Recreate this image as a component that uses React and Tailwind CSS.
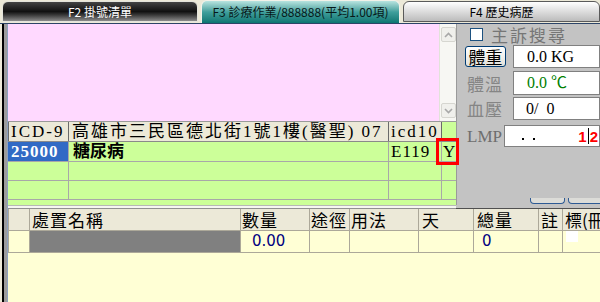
export default function App() {
  const serif = "font-['Liberation_Serif','Noto_Sans_CJK_TC',serif]";
  return (
    <div className="relative w-[600px] h-[302px] overflow-hidden bg-[#ece9d8] flex flex-col font-['Noto_Sans_CJK_TC',sans-serif]">
      {/* tabs */}
      <div className="h-[23px] shrink-0 flex items-end gap-[3px] pl-[2px]">
        <div className="w-[196px] h-[21px] mb-[1px] shrink-0 rounded-t-[6px] border border-[#e4e4dc] bg-linear-to-b from-[#444444] via-[#111111] to-[#8c8c8c] text-white text-[12px] leading-none flex items-center justify-center">
          F2 掛號清單
        </div>
        <div className="w-[199px] h-[23px] shrink-0 rounded-t-[6px] border border-b-0 border-[#f2f2ea] bg-linear-to-b from-[#b8e4e0] via-[#3f9f9c] to-[#0a7672] text-[#081818] text-[12px] leading-none flex items-center justify-center">
          F3 診療作業/888888(平均1.00項)
        </div>
        <div className="w-[197px] h-[21px] mb-[1px] shrink-0 rounded-t-[6px] border border-[#5a5a5a] bg-linear-to-b from-white to-[#bcbcbc] text-black text-[12px] leading-none flex items-center justify-center">
          F4 歷史病歷
        </div>
      </div>

      {/* body */}
      <div className="flex-1 flex border-t border-[#2c4468] min-h-0">
        {/* left frame */}
        <div className="w-[8px] shrink-0 flex">
          <div className="w-[2px] bg-[#ece9d8]" />
          <div className="w-[2px] bg-black" />
          <div className="w-[3px] bg-[#9c9c9c]" />
          <div className="w-[1px] bg-[#8da2c0]" />
        </div>

        <div className="flex-1 flex flex-col min-w-0">
          {/* top section */}
          <div className="h-[181px] shrink-0 flex">
            <div className="w-[448px] shrink-0 flex flex-col bg-[#ccff99]">
              <div className="h-[97px] flex">
                <div className="w-[431px] bg-[#ffd9ff]" />
                <div className="w-[17px] bg-[#f7f7f3] border-l border-[#e2e2da] flex flex-col justify-between items-center py-[3px]">
                  <div className="w-[15px] h-[15px] rounded-[2px] border border-[#d6d6d0] bg-[#f0f0ec] flex items-center justify-center">
                    <svg width="9" height="6" viewBox="0 0 9 6">
                      <polyline points="1,5 4.5,1.5 8,5" fill="none" stroke="#a8a8a8" strokeWidth="1.6" />
                    </svg>
                  </div>
                  <div className="w-[15px] h-[15px] rounded-[2px] border border-[#d6d6d0] bg-[#f0f0ec] flex items-center justify-center">
                    <svg width="9" height="6" viewBox="0 0 9 6">
                      <polyline points="1,1 4.5,4.5 8,1" fill="none" stroke="#a8a8a8" strokeWidth="1.6" />
                    </svg>
                  </div>
                </div>
              </div>
              <div className="h-[1px] bg-[#9a9a9a]" />
              {/* ICD header */}
              <div className={`h-[20px] flex border-b border-[#8a8a8a] text-[17px] leading-none ${serif}`}>
                <div className="w-[61px] bg-[#ece9d8] border-l border-r border-[#6a6a6a] flex items-center pl-[2px] tracking-[2px]">ICD-9</div>
                <div className="w-[320px] bg-[#ece9d8] border-r border-[#6a6a6a] flex items-center pl-[3px] tracking-[2px] whitespace-nowrap overflow-hidden">高雄市三民區德北街1號1樓(醫聖) 07</div>
                <div className="w-[53px] bg-[#ece9d8] border-r border-[#6a6a6a] flex items-center pl-[2px] tracking-[2px]">icd10</div>
                <div className="w-[14px]" />
              </div>
              {/* row 1 */}
              <div className={`h-[20px] flex border-b border-[#a8a8a8] text-[17px] leading-none ${serif}`}>
                <div className="w-[61px] bg-[#316ac5] text-white font-bold border-r border-[#a8a8a8] flex items-center pl-[3px] tracking-[1px]">25000</div>
                <div className="w-[320px] border-r border-[#a8a8a8] flex items-center pl-[4px] font-bold">糖尿病</div>
                <div className="w-[53px] border-r border-[#a8a8a8] flex items-center pl-[2px] tracking-[1px]">E119</div>
                <div className="w-[14px] flex items-center pl-[1px]">Y</div>
              </div>
              {/* row 2 */}
              <div className="h-[19px] flex border-b border-[#a8a8a8]">
                <div className="w-[61px] border-r border-[#a8a8a8]" />
                <div className="w-[320px] border-r border-[#a8a8a8]" />
                <div className="w-[53px] border-r border-[#a8a8a8]" />
                <div className="w-[14px]" />
              </div>
              {/* row 3 */}
              <div className="h-[19px] flex border-b border-[#a8a8a8]">
                <div className="w-[61px] border-r border-[#a8a8a8]" />
                <div className="w-[320px] border-r border-[#a8a8a8]" />
                <div className="w-[53px] border-r border-[#a8a8a8]" />
                <div className="w-[14px]" />
              </div>
              <div className="flex-1" />
            </div>

            {/* right gray panel */}
            <div className="flex-1 bg-[#c3c3c3] border-l border-[#9a9a9a] flex flex-col pt-[2px] min-w-0">
              <div className="h-[17px] flex items-center pl-[13px] gap-[8px]">
                <div className="w-[13px] h-[13px] border border-[#1c5180] bg-white shrink-0" />
                <span className="text-[17px] tracking-[2px] text-[#767676] leading-none whitespace-nowrap">主訴搜尋</span>
              </div>
              <div className="h-[23px] mt-[2px] flex items-center">
                <div className="ml-[8px] w-[41px] h-[21px] shrink-0 rounded-[3px] border border-[#003c74] bg-linear-to-b from-white to-[#e2e1da] flex items-center justify-center text-[17px] leading-none text-black">體重</div>
                <div className={`ml-[7px] flex-1 h-[23px] bg-white border border-[#808080] flex items-center pl-[13px] text-[16px] leading-none text-black whitespace-nowrap ${serif}`}>0.0 KG</div>
              </div>
              <div className="h-[24px] mt-[3px] flex items-center">
                <div className="w-[56px] shrink-0 pl-[10px] text-[17px] tracking-[1px] text-[#858585] leading-none">體溫</div>
                <div className={`flex-1 h-[24px] bg-white border border-[#808080] flex items-center pl-[13px] text-[16px] leading-none text-[#008000] whitespace-nowrap ${serif}`}>0.0 ℃</div>
              </div>
              <div className="h-[23px] mt-[2px] flex items-center">
                <div className="w-[56px] shrink-0 pl-[10px] text-[17px] tracking-[1px] text-[#858585] leading-none">血壓</div>
                <div className={`flex-1 h-[23px] bg-white border border-[#808080] flex items-center pl-[12px] text-[16px] leading-none text-black whitespace-nowrap ${serif}`}>0/&nbsp;&nbsp;0</div>
              </div>
              <div className="h-[22px] mt-[5px] flex items-center">
                <div className={`w-[47px] shrink-0 pl-[10px] text-[17px] text-[#6e6e6e] leading-none ${serif}`}>LMP</div>
                <div className="flex-1 h-[22px] bg-white border border-[#808080] flex items-center relative">
                  <span className="absolute left-[17px] top-[12px] w-[2px] h-[2px] bg-black" />
                  <span className="absolute left-[28px] top-[12px] w-[2px] h-[2px] bg-black" />
                  <div className="ml-auto flex items-center pr-[1px] text-[15px] font-bold text-[#ff0000] leading-none font-['Liberation_Sans',sans-serif]">
                    <span>1</span>
                    <span className="w-[1px] h-[16px] bg-black mx-[1px]" />
                    <span>2</span>
                  </div>
                </div>
              </div>
              <div className="mt-auto mb-[1px] h-[6px] flex">
                <div className="ml-[73px] w-[35px] h-[6px] rounded-b-[4px] border-x border-b border-[#2d5a94] bg-[#dcdcd8] shrink-0" />
                <div className="ml-[3px] w-[36px] h-[6px] rounded-b-[4px] border-x border-b border-[#2d5a94] bg-[#dcdcd8] shrink-0" />
              </div>
            </div>
          </div>

          {/* separator */}
          <div className="h-[4px] shrink-0 flex">
            <div className="w-[448px] bg-[#f6f6f2] border-t border-[#b8b8b8] border-b border-b-[#909090]" />
            <div className="flex-1 bg-[#c3c3c3] border-b border-[#505050]" />
          </div>

          {/* bottom table */}
          <div className="flex-1 bg-[#ffffd5] flex flex-col min-h-0">
            <div className="h-[22px] shrink-0 flex bg-[#ece9d8] border-b border-[#aca899] text-[17px] leading-none text-black whitespace-nowrap">
              <div className="w-[22px] shrink-0 border-l border-r border-[#aca899]" />
              <div className="w-[211px] shrink-0 border-r border-[#aca899] flex items-center pl-[2px] tracking-[1px]">處置名稱</div>
              <div className="w-[69px] shrink-0 border-r border-[#aca899] flex items-center pl-[1px] tracking-[1px]">數量</div>
              <div className="w-[40px] shrink-0 border-r border-[#aca899] flex items-center pl-[1px] tracking-[1px]">途徑</div>
              <div className="w-[69px] shrink-0 border-r border-[#aca899] flex items-center pl-[1px] tracking-[1px]">用法</div>
              <div className="w-[55px] shrink-0 border-r border-[#aca899] flex items-center pl-[3px]">天</div>
              <div className="w-[65px] shrink-0 border-r border-[#aca899] flex items-center pl-[3px] tracking-[1px]">總量</div>
              <div className="w-[24px] shrink-0 border-r border-[#aca899] flex items-center pl-[2px]">註</div>
              <div className="w-[60px] shrink-0 flex items-center pl-[2px]">標(冊</div>
            </div>
            <div className="h-[22px] shrink-0 flex border-b border-[#aca899] text-[15px] leading-none text-[#000080] font-['DejaVu_Sans',sans-serif]">
              <div className="w-[22px] shrink-0 border-l border-r border-[#aca899]" />
              <div className="w-[211px] shrink-0 bg-[#808080] border-r border-[#aca899]" />
              <div className="w-[69px] shrink-0 border-r border-[#aca899] flex items-center pl-[11px]">0.00</div>
              <div className="w-[40px] shrink-0 border-r border-[#aca899]" />
              <div className="w-[69px] shrink-0 border-r border-[#aca899]" />
              <div className="w-[55px] shrink-0 border-r border-[#aca899]" />
              <div className="w-[65px] shrink-0 border-r border-[#aca899] flex items-center pl-[8px]">0</div>
              <div className="w-[24px] shrink-0 border-r border-[#aca899]" />
              <div className="w-[60px] shrink-0 pl-[3px]">
                <div className="w-[12px] h-[11px] bg-white" />
              </div>
            </div>
            <div className="flex-1" />
          </div>
        </div>
      </div>

      {/* red highlight box */}
      <div className="absolute left-[436px] top-[138px] w-[23px] h-[27px] border-[3px] border-[#ff0000]" />
    </div>
  );
}
